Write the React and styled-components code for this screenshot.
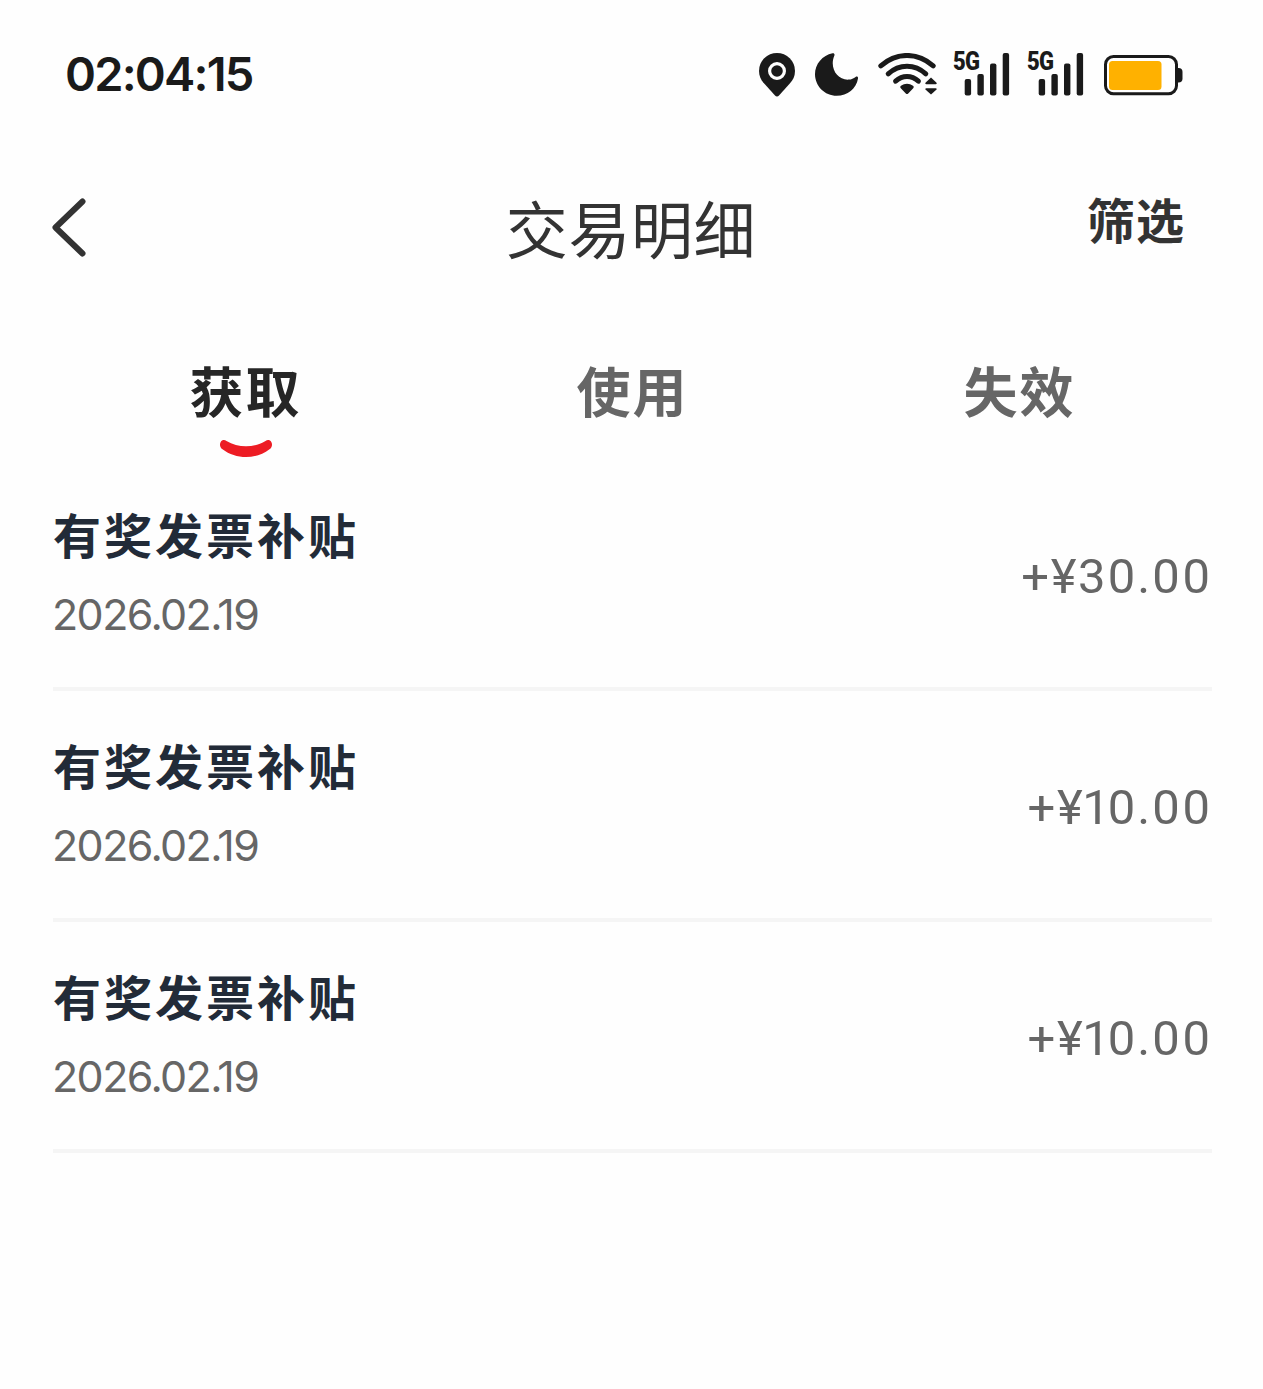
import React from 'react'
import styled, { createGlobalStyle } from 'styled-components';

const TABS = ['获取', '使用', '失效'];

const RECORDS = [
  { id: 1, title: '有奖发票补贴', date: '2026.02.19', amount: '+¥30.00' },
  { id: 2, title: '有奖发票补贴', date: '2026.02.19', amount: '+¥10.00' },
  { id: 3, title: '有奖发票补贴', date: '2026.02.19', amount: '+¥10.00' },
];

const PinIcon = () => (
  <svg width="36" height="44" viewBox="0 0 36 44">
    <path
      fill="#1a1a1a"
      d="M18 0a18 18 0 0 1 18 18c0 5.200-2 9-5.200 12.600L20 42.400c-1.200 1.300-2.800 1.300-4 0L5.200 30.600C2 27 0 23.200 0 18A18 18 0 0 1 18 0z"
    />
    <circle cx="18" cy="18" r="7.400" fill="#1a1a1a" stroke="#fff" strokeWidth="3.200" />
  </svg>
)

const MoonIcon = () => (
  <svg width="43" height="44" viewBox="0 0 43 44">
    <path
      fill="#1a1a1a"
      d="M17.500.200c1.500-.4 2.400.9 1.900 2.200C14 15.100 22.500 27.600 34 26.600c2.500-.2 4.500-1.400 6.600-2.700 1.300-.8 2.700 0 2.400 1.500C41.300 35.600 32.500 42.800 21.700 42.800 9.700 42.800 0 33.100 0 21.300 0 10.800 7.500 2.300 17.500.2z"
    />
  </svg>
)

const WifiIcon = () => (
  <svg width="60" height="44" viewBox="0 0 60 44" fill="none">
    <g stroke="#1a1a1a" strokeWidth="5" strokeLinecap="round">
      <path d="M2.800 12.800C18.500-1 39.500-1 55.200 12.800" />
      <path d="M10.200 20.800c11-10.200 26.600-10.200 37.600 0" />
      <path d="M17.600 28.200c7-6.400 15.800-6.400 22.800 0" />
    </g>
    <path
      fill="#1a1a1a"
      d="M22.800 35.200c-.8-.8-.7-1.800.2-2.500 3.600-2.700 8.400-2.700 12 0 .9.700 1 1.700.2 2.500l-5 5.200c-.8.800-1.600.8-2.400 0z"
    />
    <path fill="#1a1a1a" d="M53 24.500l5.300 5.100c.8.900.4 1.700-.6 1.700h-9.400c-1 0-1.400-.8-.6-1.700z" />
    <path fill="#1a1a1a" d="M53 41.500l5.300-4.700c.8-.8.4-1.600-.6-1.600h-9.400c-1 0-1.400.8-.6 1.600z" />
  </svg>
)

const SignalIcon = () => (
  <Signal>
    <Network>5G</Network>
    <svg width="46" height="43" viewBox="0 0 46 43" fill="#1a1a1a">
      <rect x="0.700" y="26" width="6.400" height="16.500" rx="2" />
      <rect x="13.400" y="21" width="6.400" height="21.500" rx="2" />
      <rect x="26" y="10.500" width="6.400" height="32" rx="2" />
      <rect x="38.700" y="0" width="6.400" height="42.500" rx="2" />
    </svg>
  </Signal>
)

const BatteryIcon = () => (
  <svg width="79" height="41" viewBox="0 0 79 41">
    <rect x="1.500" y="1.500" width="71" height="37.200" rx="8" fill="#fff" stroke="#1a1a1a" strokeWidth="3" />
    <rect x="5" y="6" width="52.500" height="29" rx="3.500" fill="#ffb100" />
    <path fill="#1a1a1a" d="M73 13h1.500a4 4 0 0 1 4 4v6.500a4 4 0 0 1-4 4H73z" />
  </svg>
)

const BackIcon = () => (
  <svg width="36" height="60" viewBox="0 0 36 60" fill="none">
    <path d="M31.500 4.500L4.500 30.500l27 26" stroke="#333" strokeWidth="6" strokeLinecap="round" strokeLinejoin="round" />
  </svg>
)

const SmileIcon = () => (
  <svg width="54" height="20" viewBox="0 0 54 20">
    <path
      fill="#ed1c24"
      d="M1.700 3C3 .800 5.500.500 7.500 2c11.500 7 27.500 7 39 0 2-1.500 4.500-1.200 5.800 1 1.400 2.500.7 5.500-1.800 7.300C37 20.700 17 20.700 3.500 10.300 1 8.500.3 5.500 1.700 3z"
    />
  </svg>
)

const App = () => {
  return (
    <Page>
      <GlobalStyle />
      <StatusBar>
        <Clock>02:04:15</Clock>
        <StatusIcons>
          <PinIcon />
          <MoonIcon />
          <WifiIcon />
          <SignalIcon />
          <SignalIcon />
          <BatteryIcon />
        </StatusIcons>
      </StatusBar>
      <Header>
        <BackButton aria-label="返回">
          <BackIcon />
        </BackButton>
        <PageTitle>交易明细</PageTitle>
        <FilterButton>筛选</FilterButton>
      </Header>
      <TabBar>
        {TABS.map((tab, i) => (
          <Tab key={tab} $active={i === 0}>
            {tab}
            {i === 0 && <SmileIcon />}
          </Tab>
        ))}
      </TabBar>
      <RecordList>
        {RECORDS.map((record) => (
          <Record key={record.id}>
            <div>
              <RecordTitle>{record.title}</RecordTitle>
              <RecordDate>{record.date}</RecordDate>
            </div>
            <Amount>{record.amount}</Amount>
          </Record>
        ))}
      </RecordList>
    </Page>
  )
}

export default App

const GlobalStyle = createGlobalStyle`
  * {
    box-sizing: border-box;
  }

  body {
    margin: 0;
    background: #fefefe;
  }

  svg {
    display: block;
    flex-shrink: 0;
  }
`

const Page = styled.div`
  min-height: 1389px;
  background: #fefefe;
  color: #333;
  font-family: "Noto Sans CJK SC", sans-serif;
`

const StatusBar = styled.div`
  display: flex;
  justify-content: space-between;
  height: 150px;
  padding: 53px 80px 0 65px;
`

const Clock = styled.div`
  margin-top: -1px;
  font-family: Inter, sans-serif;
  font-size: 47px;
  font-weight: 600;
  line-height: 44px;
  letter-spacing: -1.8px;
  color: #1a1a1a;
`

const StatusIcons = styled.div`
  display: flex;
  align-items: flex-start;
  gap: 18px;

  > :nth-child(2) {
    margin-left: 2px;
  }

  > :nth-child(3) {
    margin-left: 2px;
  }

  > :nth-child(4) {
    margin-left: -3px;
  }

  > :nth-child(5) {
    margin-left: -1px;
  }

  > :nth-child(6) {
    margin: 2px 0 0 2px;
  }
`

const Signal = styled.div`
  position: relative;
  display: flex;
  justify-content: flex-end;
  width: 57px;
`

const Network = styled.span`
  position: absolute;
  top: -6px;
  left: 0;
  color: #1a1a1a;
  font-family: Roboto, sans-serif;
  font-size: 25px;
  font-weight: 900;
  line-height: 30px;
  letter-spacing: -0.8px;
  transform: scaleX(0.88);
  transform-origin: left;
`

const Header = styled.div`
  display: grid;
  grid-template-columns: 200px 1fr 200px;
  height: 190px;
  padding: 30px 78px 0 51px;
`

const BackButton = styled.button`
  width: 36px;
  height: 60px;
  margin-top: 17px;
  padding: 0;
  border: 0;
  background: none;
`

const PageTitle = styled.h1`
  margin: -3px 0 0 26px;
  text-align: center;
  font-size: 62px;
  font-weight: 400;
  line-height: 100px;
  letter-spacing: 0.6px;
`

const FilterButton = styled.button`
  height: 60px;
  margin-top: 8px;
  padding: 0;
  border: 0;
  background: none;
  color: #333;
  font-family: inherit;
  font-size: 48px;
  font-weight: 700;
  line-height: 60px;
  letter-spacing: 1px;
  text-align: right;
`

const TabBar = styled.div`
  display: grid;
  grid-template-columns: repeat(3, 387px);
  justify-content: center;
  height: 120px;
  padding-left: 2px;
`

const Tab = styled.div`
  display: flex;
  flex-direction: column;
  align-items: center;
  padding-top: 10px;
  color: ${({ $active }) => ($active ? '#262626' : '#666')};
  font-size: 54px;
  font-weight: 700;
  line-height: 80px;
  letter-spacing: 2px;

  svg {
    margin-top: 9px;
  }
`

const RecordList = styled.div`
  padding: 0 51px 0 53px;
`

const Record = styled.div`
  display: flex;
  justify-content: space-between;
  height: 231px;
  padding-top: 43px;
  border-bottom: 4px solid #f5f5f5;
`

const RecordTitle = styled.div`
  color: #222b38;
  font-size: 48px;
  font-weight: 700;
  line-height: 60px;
  letter-spacing: 3px;
`

const RecordDate = styled.div`
  margin: 26px 0 0 -1px;
  color: #666;
  font-family: Inter, sans-serif;
  font-size: 43px;
  font-weight: 375;
  line-height: 50px;
  letter-spacing: -1.6px;
`

const Amount = styled.div`
  margin-top: 44px;
  color: #666;
  font-family: Roboto, sans-serif;
  font-size: 49px;
  font-variant-numeric: proportional-nums;
  line-height: 60px;
  letter-spacing: 1.6px;
`
